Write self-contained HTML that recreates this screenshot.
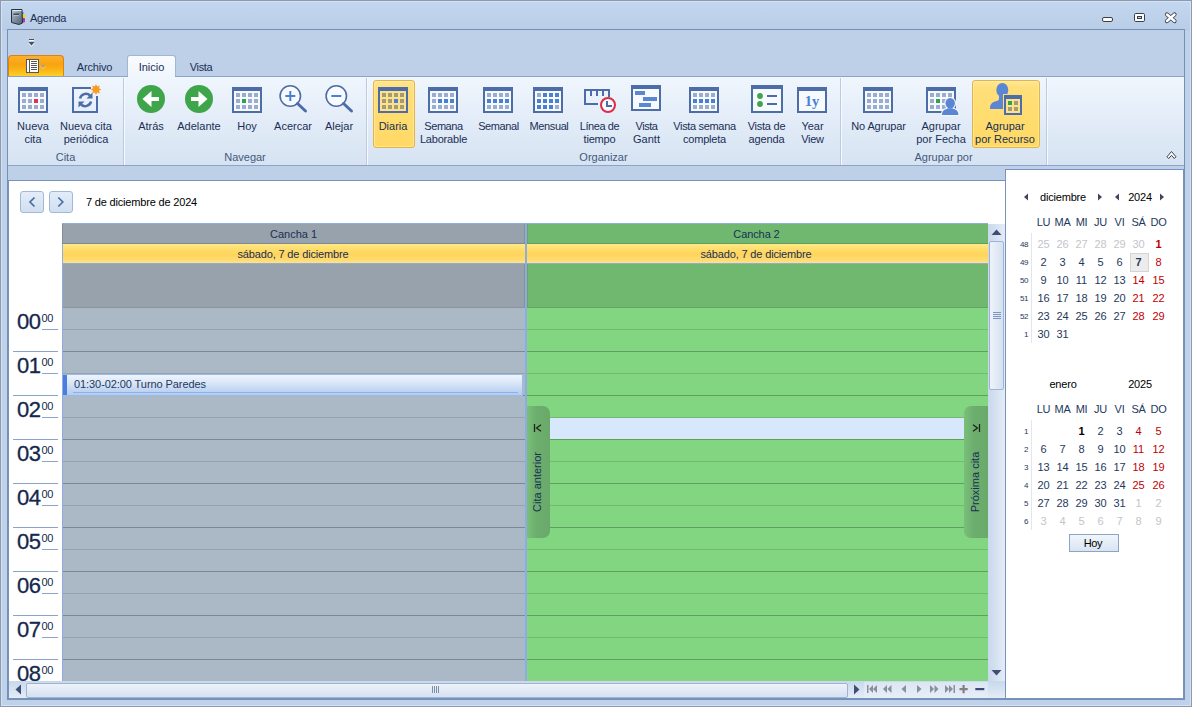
<!DOCTYPE html>
<html lang="es"><head><meta charset="utf-8"><title>Agenda</title>
<style>
*{box-sizing:border-box;margin:0;padding:0}
html,body{width:1192px;height:707px;overflow:hidden}
body{background:#bfd2ea;font-family:"Liberation Sans",sans-serif;font-size:11px;color:#1a2f55;position:relative}
.abs{position:absolute}
.t{position:absolute;white-space:nowrap;line-height:13px}
.c{text-align:center}
#win{position:absolute;left:0;top:0;width:1192px;height:707px;border:1px solid #8e99aa;background:linear-gradient(#c4d7f0 0,#b9cde7 29px,#bfd2ea 30px,#bfd2ea 100%);box-shadow:inset 0 0 0 1px #d3e2f5}
#frame{position:absolute;left:7px;top:29px;width:1178px;height:671px;border:1px solid #7390b8;background:#bdd0e8}
#ribbon{position:absolute;left:8px;top:76px;width:1176px;height:90px;border-top:1px solid #8ea4c6;border-bottom:1px solid #8ea4c6;background:linear-gradient(#f0f6fd 0,#e5eef9 40%,#d6e3f2 100%)}
.sep{position:absolute;top:78px;width:2px;height:87px;border-left:1px solid #bdcbe0;border-right:1px solid #f6f9fd}
.gcap{position:absolute;top:151px;line-height:13px;text-align:center;color:#44597a}
.blab{position:absolute;top:120px;line-height:13px;text-align:center;white-space:nowrap;transform:translateX(-50%)}
.hot{position:absolute;top:80px;height:68px;border:1px solid #e5b347;border-radius:3px;background:linear-gradient(#ffe692 0,#ffdf79 12%,#ffdc6e 60%,#ffd966 100%);box-shadow:inset 0 0 0 1px rgba(255,240,180,.55)}
.ico{position:absolute;top:83px;width:32px;height:32px}
#sched{position:absolute;left:8px;top:180px;width:998px;height:519px;background:#fff;border:1px solid #7793bb}
.navb{position:absolute;top:191px;width:24px;height:22px;border:1px solid #a3b8d8;border-radius:3px;background:linear-gradient(#e3edf9,#d2dff0)}
.hl{position:absolute;height:1px}
.hr{position:absolute;left:17px;font-size:22px;line-height:24px;color:#14284d;letter-spacing:-0.6px;-webkit-text-stroke:0.3px #14284d}
.mn{position:absolute;left:41.500px;font-size:11px;line-height:11px;color:#14284d;letter-spacing:-0.4px}
.dn{position:absolute;font-size:11px;line-height:13px;width:19px;text-align:center;color:#1e395b}
.wk{position:absolute;font-size:8px;line-height:10px;width:12px;text-align:right;color:#1e395b;letter-spacing:-0.5px}
.red{color:#c00000}.gr{color:#c2c5ca}
</style></head><body>
<div id="win"></div>
<div id="frame"></div>

<svg class="abs" style="left:10px;top:8px" width="16" height="18" viewBox="0 0 16 18"><defs><linearGradient id="bk" x1="0" y1="0" x2="1" y2="1"><stop offset="0" stop-color="#b9c5cf"/><stop offset=".45" stop-color="#8494a4"/><stop offset="1" stop-color="#4f6072"/></linearGradient></defs><rect x="11" y="4" width="2.500" height="2.500" fill="#3b8ee6"/><rect x="11" y="6" width="4" height="4.500" rx="1" fill="#f3d21e"/><rect x="11" y="10" width="4" height="4.500" rx="1" fill="#a53fa6"/><path d="M1.500 1.500L12 1.500L12.500 15L9 16.500L1.500 14.500Z" fill="url(#bk)" stroke="#26313d"/><path d="M2.500 2.600h9" stroke="#eef2f6" stroke-width="1"/><rect x="3.500" y="5.500" width="5.500" height="1.500" fill="#3e4b59"/><rect x="3.500" y="7" width="5.500" height=".6" fill="#c9d2db"/></svg>
<div class="t" style="left:30px;top:11px;font-size:11px;line-height:14px;color:#1a2f55;letter-spacing:-0.3px">Agenda</div>
<svg class="abs" style="left:1100px;top:10px" width="82" height="14" viewBox="0 0 82 14"><g fill="#fff" stroke="#3b3f4a" stroke-width="1"><rect x="2.500" y="7.500" width="10" height="4" rx="1.500"/><rect x="34.500" y="3.500" width="10" height="8" rx="1.300"/><rect x="37.500" y="6.500" width="4" height="2" fill="#c3d2e8"/></g><path d="M67 4.500l7.500 6.500M74.500 4.500L67 11" stroke="#3b3f4a" stroke-width="4.200" stroke-linecap="round"/><path d="M67 4.500l7.500 6.500M74.500 4.500L67 11" stroke="#fff" stroke-width="2.500" stroke-linecap="round"/></svg>
<svg class="abs" style="left:28px;top:38px" width="8" height="10" viewBox="0 0 8 10"><rect x="1" y="1" width="5" height="1" fill="#4b4f58"/><rect x="1" y="2" width="5" height="1" fill="#f4f7fb"/><path d="M0.500 4h6L3.500 7.500z" fill="#4b4f58"/><path d="M0.500 5l3 3.500 3-3.500" fill="none" stroke="#eef3fa" stroke-width=".8"/></svg>
<div class="abs" style="left:8px;top:55px;width:56px;height:22px;border:1px solid #e07f14;border-bottom:none;border-radius:4px 4px 0 0;background:linear-gradient(#fbb02a 0,#f9a40f 40%,#fab418 65%,#fdd42a 100%)"></div>
<svg class="abs" style="left:26px;top:59px" width="22" height="14" viewBox="0 0 22 14"><rect x="0.500" y="0.500" width="12" height="13" fill="#fff" stroke="#55575d"/><rect x="3" y="1" width="1" height="12" fill="#55575d"/><g fill="#55575d"><rect x="5" y="2" width="6" height="1"/><rect x="5" y="4" width="6" height="1"/><rect x="5" y="6" width="6" height="1"/><rect x="5" y="8" width="6" height="1"/><rect x="5" y="10" width="6" height="1"/></g><path d="M14.500 6h5l-2.500 3z" fill="#a99c8c"/><path d="M14.500 6.800l2.500 3 2.500-3" fill="none" stroke="#fbe08a" stroke-width=".6"/></svg>
<div class="t c" style="left:66px;top:61px;width:57px;letter-spacing:-0.17px">Archivo</div>
<div class="abs" style="left:127px;top:55px;width:49px;height:23px;border:1px solid #a0b6d6;border-bottom:none;border-radius:3px 3px 0 0;background:linear-gradient(#f9fbfe,#f0f6fd)"></div>
<div class="t c" style="left:127px;top:61px;width:49px">Inicio</div>
<div class="t c" style="left:178px;top:61px;width:46px;letter-spacing:-0.4px">Vista</div>
<div id="ribbon"></div>
<div class="abs" style="left:128px;top:76px;width:47px;height:2px;background:#f1f6fd"></div>
<div class="sep" style="left:123px"></div>
<div class="sep" style="left:366px"></div>
<div class="sep" style="left:840px"></div>
<div class="sep" style="left:1046px"></div>
<div class="gcap" style="left:8px;width:115px">Cita</div>
<div class="gcap" style="left:124px;width:242px">Navegar</div>
<div class="gcap" style="left:367px;width:473px">Organizar</div>
<div class="gcap" style="left:841px;width:205px">Agrupar por</div>
<div class="hot" style="left:373px;width:42px"></div>
<div class="hot" style="left:972px;width:68px"></div>
<svg class="ico" style="left:17px" viewBox="0 0 32 32" overflow="visible"><rect x="2" y="5" width="28" height="24" fill="#f6f9fd" stroke="#4d6da8" stroke-width="2"/><rect x="1" y="4" width="30" height="4" fill="#4d6da8"/><rect x="5" y="10" width="4" height="4" fill="#9badcf"/><rect x="11" y="10" width="4" height="4" fill="#9badcf"/><rect x="17" y="10" width="4" height="4" fill="#9badcf"/><rect x="23" y="10" width="4" height="4" fill="#9badcf"/><rect x="5" y="16" width="4" height="4" fill="#9badcf"/><rect x="11" y="16" width="4" height="4" fill="#9badcf"/><rect x="17" y="16" width="4" height="4" fill="#e0334c"/><rect x="23" y="16" width="4" height="4" fill="#9badcf"/><rect x="5" y="22" width="4" height="4" fill="#9badcf"/><rect x="11" y="22" width="4" height="4" fill="#9badcf"/><rect x="17" y="22" width="4" height="4" fill="#9badcf"/><rect x="23" y="22" width="4" height="4" fill="#9badcf"/></svg>
<div class="blab" style="left:33px">Nueva<br>cita</div>
<svg class="ico" style="left:70px" viewBox="0 0 32 32" overflow="visible"><path d="M21 5H3v24h24V13" fill="none" stroke="#4d6da8" stroke-width="2"/><path d="M10 15.500a6 6 0 0 1 10-3" fill="none" stroke="#4d6da8" stroke-width="2.500"/><path d="M22.500 9.500v6h-6z" fill="#4d6da8"/><path d="M21 18.500a6 6 0 0 1-10 3" fill="none" stroke="#4d6da8" stroke-width="2.500"/><path d="M8.500 24.500v-6h6z" fill="#4d6da8"/><path d="M26 1l1.200 2.600 2.700-1-1 2.700L31.500 6.500l-2.600 1.200 1 2.700-2.700-1L26 12l-1.200-2.600-2.700 1 1-2.700L20.500 6.500l2.600-1.200-1-2.700 2.700 1z" fill="#f99b1c"/></svg>
<div class="blab" style="left:86px">Nueva cita<br>periódica</div>
<svg class="ico" style="left:135px" viewBox="0 0 32 32" overflow="visible"><circle cx="16" cy="16" r="14" fill="#3fa54b"/><path d="M7.500 16l9-8v6h7.500v4h-7.500v6z" fill="#fff"/></svg>
<div class="blab" style="left:151px">Atrás</div>
<svg class="ico" style="left:183px" viewBox="0 0 32 32" overflow="visible"><circle cx="16" cy="16" r="14" fill="#3fa54b"/><path d="M24.500 16l-9-8v6H8v4h7.500v6z" fill="#fff"/></svg>
<div class="blab" style="left:199px">Adelante</div>
<svg class="ico" style="left:231px" viewBox="0 0 32 32" overflow="visible"><rect x="2" y="5" width="28" height="24" fill="#f6f9fd" stroke="#4d6da8" stroke-width="2"/><rect x="1" y="4" width="30" height="4" fill="#4d6da8"/><rect x="5" y="10" width="4" height="4" fill="#9badcf"/><rect x="11" y="10" width="4" height="4" fill="#9badcf"/><rect x="17" y="10" width="4" height="4" fill="#9badcf"/><rect x="23" y="10" width="4" height="4" fill="#9badcf"/><rect x="5" y="16" width="4" height="4" fill="#9badcf"/><rect x="11" y="16" width="4" height="4" fill="#2fa24a"/><rect x="17" y="16" width="4" height="4" fill="#9badcf"/><rect x="23" y="16" width="4" height="4" fill="#9badcf"/><rect x="5" y="22" width="4" height="4" fill="#9badcf"/><rect x="11" y="22" width="4" height="4" fill="#9badcf"/><rect x="17" y="22" width="4" height="4" fill="#9badcf"/><rect x="23" y="22" width="4" height="4" fill="#9badcf"/></svg>
<div class="blab" style="left:247px">Hoy</div>
<svg class="ico" style="left:277px" viewBox="0 0 32 32" overflow="visible"><circle cx="13.300" cy="13" r="10.200" fill="#f7fafe" stroke="#4d6da8" stroke-width="1.600"/><path d="M20.500 20.500l8 7.500" stroke="#4d6da8" stroke-width="3" stroke-linecap="round"/><path d="M8.300 13h10M13.300 8v10" stroke="#4a7fd6" stroke-width="2"/></svg>
<div class="blab" style="left:293px">Acercar</div>
<svg class="ico" style="left:323px" viewBox="0 0 32 32" overflow="visible"><circle cx="13.300" cy="13" r="10.200" fill="#f7fafe" stroke="#4d6da8" stroke-width="1.600"/><path d="M20.500 20.500l8 7.500" stroke="#4d6da8" stroke-width="3" stroke-linecap="round"/><path d="M8.300 13h10" stroke="#4a7fd6" stroke-width="2"/></svg>
<div class="blab" style="left:339px">Alejar</div>
<svg class="ico" style="left:377px" viewBox="0 0 32 32" overflow="visible"><rect x="2" y="5" width="28" height="24" fill="#fde28d" stroke="#4d6da8" stroke-width="2"/><rect x="1" y="4" width="30" height="4" fill="#4d6da8"/><rect x="5" y="10" width="4" height="4" fill="#a59c73"/><rect x="11" y="10" width="4" height="4" fill="#a59c73"/><rect x="17" y="10" width="4" height="4" fill="#a59c73"/><rect x="23" y="10" width="4" height="4" fill="#a59c73"/><rect x="5" y="16" width="4" height="4" fill="#a59c73"/><rect x="11" y="16" width="4" height="4" fill="#a59c73"/><rect x="17" y="16" width="4" height="4" fill="#4a7fd6"/><rect x="23" y="16" width="4" height="4" fill="#a59c73"/><rect x="5" y="22" width="4" height="4" fill="#a59c73"/><rect x="11" y="22" width="4" height="4" fill="#a59c73"/><rect x="17" y="22" width="4" height="4" fill="#a59c73"/><rect x="23" y="22" width="4" height="4" fill="#a59c73"/></svg>
<div class="blab" style="left:393px">Diaria</div>
<svg class="ico" style="left:427px" viewBox="0 0 32 32" overflow="visible"><rect x="2" y="5" width="28" height="24" fill="#f6f9fd" stroke="#4d6da8" stroke-width="2"/><rect x="1" y="4" width="30" height="4" fill="#4d6da8"/><rect x="5" y="10" width="4" height="4" fill="#9badcf"/><rect x="11" y="10" width="4" height="4" fill="#9badcf"/><rect x="17" y="10" width="4" height="4" fill="#9badcf"/><rect x="23" y="10" width="4" height="4" fill="#9badcf"/><rect x="5" y="16" width="4" height="4" fill="#9badcf"/><rect x="11" y="16" width="4" height="4" fill="#4a7fd6"/><rect x="17" y="16" width="4" height="4" fill="#4a7fd6"/><rect x="23" y="16" width="4" height="4" fill="#4a7fd6"/><rect x="5" y="22" width="4" height="4" fill="#9badcf"/><rect x="11" y="22" width="4" height="4" fill="#9badcf"/><rect x="17" y="22" width="4" height="4" fill="#9badcf"/><rect x="23" y="22" width="4" height="4" fill="#9badcf"/></svg>
<div class="blab" style="left:443.5px"><span style="letter-spacing:-0.45px">Semana</span><br><span style="letter-spacing:-0.2px">Laborable</span></div>
<svg class="ico" style="left:482px" viewBox="0 0 32 32" overflow="visible"><rect x="2" y="5" width="28" height="24" fill="#f6f9fd" stroke="#4d6da8" stroke-width="2"/><rect x="1" y="4" width="30" height="4" fill="#4d6da8"/><rect x="5" y="10" width="4" height="4" fill="#9badcf"/><rect x="11" y="10" width="4" height="4" fill="#9badcf"/><rect x="17" y="10" width="4" height="4" fill="#9badcf"/><rect x="23" y="10" width="4" height="4" fill="#9badcf"/><rect x="5" y="16" width="4" height="4" fill="#4a7fd6"/><rect x="11" y="16" width="4" height="4" fill="#4a7fd6"/><rect x="17" y="16" width="4" height="4" fill="#4a7fd6"/><rect x="23" y="16" width="4" height="4" fill="#4a7fd6"/><rect x="5" y="22" width="4" height="4" fill="#9badcf"/><rect x="11" y="22" width="4" height="4" fill="#9badcf"/><rect x="17" y="22" width="4" height="4" fill="#9badcf"/><rect x="23" y="22" width="4" height="4" fill="#9badcf"/></svg>
<div class="blab" style="left:498.5px"><span style="letter-spacing:-0.4px">Semanal</span></div>
<svg class="ico" style="left:532px" viewBox="0 0 32 32" overflow="visible"><rect x="2" y="5" width="28" height="24" fill="#f6f9fd" stroke="#4d6da8" stroke-width="2"/><rect x="1" y="4" width="30" height="4" fill="#4d6da8"/><rect x="5" y="10" width="4" height="4" fill="#9badcf"/><rect x="11" y="10" width="4" height="4" fill="#4a7fd6"/><rect x="17" y="10" width="4" height="4" fill="#4a7fd6"/><rect x="23" y="10" width="4" height="4" fill="#4a7fd6"/><rect x="5" y="16" width="4" height="4" fill="#4a7fd6"/><rect x="11" y="16" width="4" height="4" fill="#4a7fd6"/><rect x="17" y="16" width="4" height="4" fill="#4a7fd6"/><rect x="23" y="16" width="4" height="4" fill="#4a7fd6"/><rect x="5" y="22" width="4" height="4" fill="#4a7fd6"/><rect x="11" y="22" width="4" height="4" fill="#4a7fd6"/><rect x="17" y="22" width="4" height="4" fill="#4a7fd6"/><rect x="23" y="22" width="4" height="4" fill="#9badcf"/></svg>
<div class="blab" style="left:549px"><span style="letter-spacing:-0.4px">Mensual</span></div>
<svg class="ico" style="left:583px" viewBox="0 0 32 32" overflow="visible"><path d="M26 14V7H2v14h13" fill="none" stroke="#4d6da8" stroke-width="2"/><path d="M8 7v6M14 7v6M20 7v6" stroke="#4d6da8" stroke-width="2"/><circle cx="25" cy="22" r="7" fill="#f6f9fd" stroke="#dc2d43" stroke-width="2"/><path d="M24 18v5h5" fill="none" stroke="#4d6da8" stroke-width="2"/></svg>
<div class="blab" style="left:599.5px"><span style="letter-spacing:-0.4px">Línea de</span><br><span style="letter-spacing:-0.2px">tiempo</span></div>
<svg class="ico" style="left:630px" viewBox="0 0 32 32" overflow="visible"><rect x="2" y="3" width="28" height="24" fill="#f6f9fd" stroke="#4d6da8" stroke-width="2"/><rect x="1" y="2" width="30" height="4" fill="#4d6da8"/><rect x="5" y="8" width="10" height="4" fill="#5a86d4"/><rect x="13" y="14" width="14" height="4" fill="#5a86d4"/><rect x="9" y="20" width="12" height="4" fill="#5a86d4"/></svg>
<div class="blab" style="left:646.5px"><span style="letter-spacing:-0.45px">Vista</span><br>Gantt</div>
<svg class="ico" style="left:688px" viewBox="0 0 32 32" overflow="visible"><rect x="2" y="5" width="28" height="24" fill="#f6f9fd" stroke="#4d6da8" stroke-width="2"/><rect x="1" y="4" width="30" height="4" fill="#4d6da8"/><rect x="5" y="10" width="4" height="4" fill="#9badcf"/><rect x="11" y="10" width="4" height="4" fill="#9badcf"/><rect x="17" y="10" width="4" height="4" fill="#9badcf"/><rect x="23" y="10" width="4" height="4" fill="#9badcf"/><rect x="5" y="16" width="4" height="4" fill="#4a7fd6"/><rect x="11" y="16" width="4" height="4" fill="#4a7fd6"/><rect x="17" y="16" width="4" height="4" fill="#4a7fd6"/><rect x="23" y="16" width="4" height="4" fill="#4a7fd6"/><rect x="5" y="22" width="4" height="4" fill="#9badcf"/><rect x="11" y="22" width="4" height="4" fill="#9badcf"/><rect x="17" y="22" width="4" height="4" fill="#9badcf"/><rect x="23" y="22" width="4" height="4" fill="#9badcf"/></svg>
<div class="blab" style="left:704.5px"><span style="letter-spacing:-0.33px">Vista semana</span><br><span style="letter-spacing:-0.2px">completa</span></div>
<svg class="ico" style="left:751px" viewBox="0 0 32 32" overflow="visible"><rect x="1" y="3" width="30" height="26" fill="#f6f9fd" stroke="#4d6da8" stroke-width="2"/><rect x="0" y="2" width="32" height="4" fill="#4d6da8"/><circle cx="9" cy="13" r="2.900" fill="#3fa54b"/><circle cx="9" cy="21" r="2.900" fill="#3fa54b"/><rect x="16" y="12" width="10" height="2" fill="#4d6da8"/><rect x="16" y="20" width="10" height="2" fill="#4d6da8"/></svg>
<div class="blab" style="left:766.5px"><span style="letter-spacing:-0.25px">Vista de</span><br><span style="letter-spacing:-0.15px">agenda</span></div>
<svg class="ico" style="left:796px" viewBox="0 0 32 32" overflow="visible"><rect x="2" y="5" width="28" height="24" fill="#f6f9fd" stroke="#4d6da8" stroke-width="2"/><rect x="1" y="4" width="30" height="4" fill="#4d6da8"/><text x="16" y="22.800" text-anchor="middle" font-family="Liberation Serif,serif" font-weight="bold" font-size="14.500" fill="#4a7fd6">1y</text></svg>
<div class="blab" style="left:812.5px">Year<br><span style="letter-spacing:-0.3px">View</span></div>
<svg class="ico" style="left:862px" viewBox="0 0 32 32" overflow="visible"><rect x="2" y="5" width="28" height="24" fill="#f6f9fd" stroke="#4d6da8" stroke-width="2"/><rect x="1" y="4" width="30" height="4" fill="#4d6da8"/><rect x="5" y="10" width="4" height="4" fill="#9badcf"/><rect x="11" y="10" width="4" height="4" fill="#9badcf"/><rect x="17" y="10" width="4" height="4" fill="#9badcf"/><rect x="23" y="10" width="4" height="4" fill="#9badcf"/><rect x="5" y="16" width="4" height="4" fill="#9badcf"/><rect x="11" y="16" width="4" height="4" fill="#9badcf"/><rect x="17" y="16" width="4" height="4" fill="#9badcf"/><rect x="23" y="16" width="4" height="4" fill="#9badcf"/><rect x="5" y="22" width="4" height="4" fill="#9badcf"/><rect x="11" y="22" width="4" height="4" fill="#9badcf"/><rect x="17" y="22" width="4" height="4" fill="#9badcf"/><rect x="23" y="22" width="4" height="4" fill="#9badcf"/></svg>
<div class="blab" style="left:878.5px"><span style="letter-spacing:-0.1px">No Agrupar</span></div>
<svg class="ico" style="left:925px" viewBox="0 0 32 32" overflow="visible"><rect x="2" y="5" width="28" height="24" fill="#f6f9fd" stroke="#4d6da8" stroke-width="2"/><rect x="1" y="4" width="30" height="4" fill="#4d6da8"/><rect x="5" y="10" width="4" height="4" fill="#9badcf"/><rect x="11" y="10" width="4" height="4" fill="#9badcf"/><rect x="17" y="10" width="4" height="4" fill="#9badcf"/><rect x="23" y="10" width="4" height="4" fill="#9badcf"/><rect x="5" y="16" width="4" height="4" fill="#9badcf"/><rect x="11" y="16" width="4" height="4" fill="#2fa24a"/><rect x="17" y="16" width="4" height="4" fill="#9badcf"/><rect x="23" y="16" width="4" height="4" fill="#9badcf"/><rect x="5" y="22" width="4" height="4" fill="#9badcf"/><rect x="11" y="22" width="4" height="4" fill="#9badcf"/><rect x="17" y="22" width="4" height="4" fill="#9badcf"/><rect x="23" y="22" width="4" height="4" fill="#9badcf"/><g fill="#5a86d4" stroke="#f1f6fc" stroke-width="2.400" stroke-linejoin="round"><ellipse cx="25.200" cy="20.300" rx="4.700" ry="5.200"/><path d="M17 32c0-3.800 1.800-5.200 4.800-6l1.200-.4h4.400l1.200.4c3 .8 4.800 2.200 4.800 6z"/></g><g fill="#5a86d4"><ellipse cx="25.200" cy="20.300" rx="4.700" ry="5.200"/><path d="M17 32c0-3.800 1.800-5.200 4.800-6l1.200-.8h4.400l1.200.8c3 .8 4.800 2.200 4.800 6z"/></g></svg>
<div class="blab" style="left:941px">Agrupar<br>por Fecha</div>
<svg class="ico" style="left:989px" viewBox="0 0 32 32" overflow="visible"><g fill="#5a86d4"><ellipse cx="13.300" cy="7" rx="6" ry="7"/><path d="M1 26c0-4.500 1.500-6.500 5-7.500c2-.5 3.500-1 4-2.500v-4h6v14z"/></g><rect x="15" y="12" width="18" height="20" fill="none" stroke="#ffde76" stroke-width="2"/><rect x="16" y="13" width="16" height="18" fill="#fde28d" stroke="#4d6da8" stroke-width="2"/><rect x="15" y="12" width="18" height="4" fill="#4d6da8"/><rect x="19" y="18" width="4" height="4" fill="#2fa24a"/><rect x="25" y="18" width="4" height="4" fill="#a59c73"/><rect x="19" y="24" width="4" height="4" fill="#a59c73"/><rect x="25" y="24" width="4" height="4" fill="#a59c73"/></svg>
<div class="blab" style="left:1005px">Agrupar<br>por Recurso</div>
<svg class="abs" style="left:1165px;top:149px" width="13" height="12" viewBox="0 0 13 12"><path d="M2 7.800L6.500 2.500 11 7.800 9.300 9.500 6.500 6.300 3.700 9.500z" fill="#fff" stroke="#3b3f4a" stroke-width="1" stroke-linejoin="round"/></svg>
<div id="sched"></div>
<div class="navb" style="left:20px"><svg class="abs" style="left:-1px;top:-1px" width="24" height="22"><path d="M14.500 6.500L10 11l4.500 4.500" fill="none" stroke="#4a6ca8" stroke-width="1.700"/></svg></div>
<div class="navb" style="left:49px"><svg class="abs" style="left:-1px;top:-1px" width="24" height="22"><path d="M9.300 6.500L13.800 11 9.300 15.500" fill="none" stroke="#4a6ca8" stroke-width="1.700"/></svg></div>
<div class="t" style="left:86px;top:196px;color:#000;letter-spacing:-0.18px">7 de diciembre de 2024</div>
<div class="abs" style="left:62px;top:224px;width:463px;height:84px;background:#98a2ad;border-left:1px solid #838d9a;border-right:1px solid #868f9b"></div>
<div class="abs" style="left:527px;top:224px;width:461px;height:84px;background:#70b870;border-left:1px solid #63a564"></div>
<div class="abs" style="left:63px;top:308px;width:462px;height:374px;background:#abb8c5"></div>
<div class="abs" style="left:527px;top:308px;width:461px;height:374px;background:#82d682"></div>
<div class="t c" style="left:62px;top:228px;width:463px">Cancha 1</div>
<div class="t c" style="left:526px;top:228px;width:461px;letter-spacing:-0.1px">Cancha 2</div>
<div class="abs" style="left:62px;top:243px;width:463px;height:1px;background:#7f8995"></div>
<div class="abs" style="left:527px;top:243px;width:461px;height:1px;background:#5f9f60"></div>
<div class="abs" style="left:63px;top:244px;width:462px;height:19px;background:linear-gradient(#ffe985 0,#ffdc6a 30%,#ffd45c 55%,#ffda6c 80%,#ffe382 100%)"></div>
<div class="t c" style="left:62px;top:248px;width:462px;letter-spacing:-0.15px">sábado, 7 de diciembre</div>
<div class="abs" style="left:527px;top:244px;width:461px;height:19px;background:linear-gradient(#ffe985 0,#ffdc6a 30%,#ffd45c 55%,#ffda6c 80%,#ffe382 100%)"></div>
<div class="t c" style="left:525.5px;top:248px;width:461px;letter-spacing:-0.15px">sábado, 7 de diciembre</div>
<div class="abs" style="left:62px;top:223px;width:926px;height:1px;background:#8eace0"></div>
<div class="abs" style="left:62px;top:263px;width:926px;height:1px;background:#8eace0"></div>
<div class="hl" style="left:63px;top:307px;width:462px;background:#8a94a0"></div>
<div class="hl" style="left:527px;top:307px;width:461px;background:#62a663"></div>
<div class="hl" style="left:63px;top:329px;width:462px;background:#97a3af"></div>
<div class="hl" style="left:527px;top:329px;width:461px;background:#70bb71"></div>
<div class="hl" style="left:42px;top:329px;width:16px;background:#8ba5c9"></div>
<div class="hl" style="left:63px;top:351px;width:462px;background:#7d8893"></div>
<div class="hl" style="left:527px;top:351px;width:461px;background:#5f9f60"></div>
<div class="hl" style="left:13px;top:351px;width:45px;background:#8ba5c9"></div>
<div class="hl" style="left:63px;top:373px;width:462px;background:#97a3af"></div>
<div class="hl" style="left:527px;top:373px;width:461px;background:#70bb71"></div>
<div class="hl" style="left:42px;top:373px;width:16px;background:#8ba5c9"></div>
<div class="hl" style="left:63px;top:395px;width:462px;background:#7d8893"></div>
<div class="hl" style="left:527px;top:395px;width:461px;background:#5f9f60"></div>
<div class="hl" style="left:13px;top:395px;width:45px;background:#8ba5c9"></div>
<div class="hl" style="left:63px;top:417px;width:462px;background:#97a3af"></div>
<div class="hl" style="left:527px;top:417px;width:461px;background:#70bb71"></div>
<div class="hl" style="left:42px;top:417px;width:16px;background:#8ba5c9"></div>
<div class="hl" style="left:63px;top:439px;width:462px;background:#7d8893"></div>
<div class="hl" style="left:527px;top:439px;width:461px;background:#5f9f60"></div>
<div class="hl" style="left:13px;top:439px;width:45px;background:#8ba5c9"></div>
<div class="hl" style="left:63px;top:461px;width:462px;background:#97a3af"></div>
<div class="hl" style="left:527px;top:461px;width:461px;background:#70bb71"></div>
<div class="hl" style="left:42px;top:461px;width:16px;background:#8ba5c9"></div>
<div class="hl" style="left:63px;top:483px;width:462px;background:#7d8893"></div>
<div class="hl" style="left:527px;top:483px;width:461px;background:#5f9f60"></div>
<div class="hl" style="left:13px;top:483px;width:45px;background:#8ba5c9"></div>
<div class="hl" style="left:63px;top:505px;width:462px;background:#97a3af"></div>
<div class="hl" style="left:527px;top:505px;width:461px;background:#70bb71"></div>
<div class="hl" style="left:42px;top:505px;width:16px;background:#8ba5c9"></div>
<div class="hl" style="left:63px;top:527px;width:462px;background:#7d8893"></div>
<div class="hl" style="left:527px;top:527px;width:461px;background:#5f9f60"></div>
<div class="hl" style="left:13px;top:527px;width:45px;background:#8ba5c9"></div>
<div class="hl" style="left:63px;top:549px;width:462px;background:#97a3af"></div>
<div class="hl" style="left:527px;top:549px;width:461px;background:#70bb71"></div>
<div class="hl" style="left:42px;top:549px;width:16px;background:#8ba5c9"></div>
<div class="hl" style="left:63px;top:571px;width:462px;background:#7d8893"></div>
<div class="hl" style="left:527px;top:571px;width:461px;background:#5f9f60"></div>
<div class="hl" style="left:13px;top:571px;width:45px;background:#8ba5c9"></div>
<div class="hl" style="left:63px;top:593px;width:462px;background:#97a3af"></div>
<div class="hl" style="left:527px;top:593px;width:461px;background:#70bb71"></div>
<div class="hl" style="left:42px;top:593px;width:16px;background:#8ba5c9"></div>
<div class="hl" style="left:63px;top:615px;width:462px;background:#7d8893"></div>
<div class="hl" style="left:527px;top:615px;width:461px;background:#5f9f60"></div>
<div class="hl" style="left:13px;top:615px;width:45px;background:#8ba5c9"></div>
<div class="hl" style="left:63px;top:637px;width:462px;background:#97a3af"></div>
<div class="hl" style="left:527px;top:637px;width:461px;background:#70bb71"></div>
<div class="hl" style="left:42px;top:637px;width:16px;background:#8ba5c9"></div>
<div class="hl" style="left:63px;top:659px;width:462px;background:#7d8893"></div>
<div class="hl" style="left:527px;top:659px;width:461px;background:#5f9f60"></div>
<div class="hl" style="left:13px;top:659px;width:45px;background:#8ba5c9"></div>
<div class="hr" style="top:310px">00</div><div class="mn" style="top:313px">00</div>
<div class="hr" style="top:354px">01</div><div class="mn" style="top:357px">00</div>
<div class="hr" style="top:398px">02</div><div class="mn" style="top:401px">00</div>
<div class="hr" style="top:442px">03</div><div class="mn" style="top:445px">00</div>
<div class="hr" style="top:486px">04</div><div class="mn" style="top:489px">00</div>
<div class="hr" style="top:530px">05</div><div class="mn" style="top:533px">00</div>
<div class="hr" style="top:574px">06</div><div class="mn" style="top:577px">00</div>
<div class="hr" style="top:618px">07</div><div class="mn" style="top:621px">00</div>
<div class="hr" style="top:662px">08</div><div class="mn" style="top:665px">00</div>
<div class="abs" style="left:62px;top:244px;width:1px;height:437px;background:#8eace0"></div>
<div class="abs" style="left:525px;top:224px;width:2px;height:457px;background:#8eace0"></div>
<div class="abs" style="left:63px;top:374px;width:460px;height:22px;border:1px solid #9bbaea;background:linear-gradient(#eef4fc 0,#dde8f8 35%,#c5d8f3 70%,#b3ccef 100%)"></div>
<div class="abs" style="left:63px;top:375px;width:4px;height:20px;background:#4a7fe0"></div>
<div class="abs" style="left:73px;top:392px;width:445px;height:1px;background:#8fb0e6"></div>
<div class="t" style="left:74px;top:378px;color:#1e395b;letter-spacing:-0.08px">01:30-02:00 Turno Paredes</div>
<div class="abs" style="left:527px;top:418px;width:461px;height:21px;background:#d7e7fc"></div>
<div class="abs" style="left:527px;top:406px;width:23px;height:132px;border-radius:0 7px 7px 0;background:linear-gradient(90deg,#79bf79 0,#6dae6e 40%,#69a96a 100%)"></div>
<div class="abs" style="left:964px;top:406px;width:24px;height:132px;border-radius:7px 0 0 7px;background:linear-gradient(90deg,#79bf79 0,#6dae6e 40%,#69a96a 100%)"></div>
<svg class="abs" style="left:533px;top:422.500px" width="10" height="10"><path d="M1.500 1v8M8 1.800L3.500 5 8 8.200" fill="none" stroke="#1b241b" stroke-width="1.250"/></svg>
<svg class="abs" style="left:971px;top:422.500px" width="10" height="10"><path d="M8.500 1v8M2 1.800L6.500 5 2 8.200" fill="none" stroke="#1b241b" stroke-width="1.250"/></svg>
<div class="t" style="left:536.500px;top:482px;width:0;height:0"><div style="position:absolute;transform:translate(-50%,-50%) rotate(-90deg);white-space:nowrap;line-height:13px">Cita anterior</div></div>
<div class="t" style="left:975px;top:482px;width:0;height:0"><div style="position:absolute;transform:translate(-50%,-50%) rotate(-90deg);white-space:nowrap;line-height:13px">Próxima cita</div></div>
<div class="abs" style="left:988px;top:224px;width:17px;height:458px;background:linear-gradient(90deg,#c9d8ec,#e4ecf7)"></div>
<div class="abs" style="left:989px;top:241px;width:15px;height:149px;border:1px solid #9fb4d3;border-radius:2px;background:linear-gradient(90deg,#eef3fa,#d5e1f1)"></div>
<svg class="abs" style="left:991px;top:228px" width="11" height="8"><path d="M0.500 7L5.500 1.500 10.500 7z" fill="#3f4f74"/></svg>
<svg class="abs" style="left:991px;top:669px" width="11" height="8"><path d="M0.500 1L5.500 6.500 10.500 1z" fill="#3f4f74"/></svg>
<div class="abs" style="left:993px;top:312px;width:8px;height:1px;background:#7f97bf;box-shadow:0 2px 0 #7f97bf,0 4px 0 #7f97bf,0 6px 0 #7f97bf"></div>
<div class="abs" style="left:9px;top:681px;width:996px;height:17px;background:linear-gradient(#c9d8ec,#e4ecf7)"></div>
<div class="abs" style="left:26px;top:683px;width:822px;height:15px;border:1px solid #9fb4d3;border-radius:2px;background:linear-gradient(#eef3fa,#d5e1f1)"></div>
<svg class="abs" style="left:14px;top:684px" width="8" height="11"><path d="M7 0.500L1.500 5.500 7 10.500z" fill="#3f4f74"/></svg>
<svg class="abs" style="left:853px;top:684px" width="8" height="11"><path d="M1 0.500L6.500 5.500 1 10.500z" fill="#3f4f74"/></svg>
<div class="abs" style="left:432px;top:686px;width:1px;height:7px;background:#7c8ea9;box-shadow:2px 0 0 #7c8ea9,4px 0 0 #7c8ea9,6px 0 0 #7c8ea9"></div>
<div class="abs" style="left:864px;top:682px;width:124px;height:16px;background:linear-gradient(#dbe6f4,#e6eef8)"></div>
<svg class="abs" style="left:864px;top:682.400px" width="126" height="14" viewBox="0 0 126 14"><g fill="#8a8f99"><rect x="3" y="3" width="1.500" height="8"/><path d="M9 3v8L5 7zM13 3v8L9 7z"/><path d="M23 3v8L19 7zM27.500 3v8L23.500 7z"/><path d="M42 3v8L37.500 7z"/><path d="M53 3v8l4.500-4z"/><path d="M66 3v8l4-4zM70.500 3v8l4-4z"/><path d="M81 3v8l4-4zM85 3v8l4-4z"/><rect x="89.500" y="3" width="1.500" height="8"/><path d="M95.500 6h3V3h2.200v3h3v2.200h-3v3h-2.200v-3h-3z" fill="#808080"/><rect x="111.300" y="6" width="9" height="2.200" fill="#3d4b7a"/></g></svg>
<div class="abs" style="left:1005px;top:169px;width:179px;height:530px;background:#fff;border:1px solid #7793bb"></div>
<svg class="abs" style="left:1023px;top:193px" width="6" height="8"><path d="M5 0.500v7L1 4z" fill="#3f4562"/></svg>
<svg class="abs" style="left:1097px;top:193px" width="6" height="8"><path d="M1 0.500v7L5 4z" fill="#3f4562"/></svg>
<svg class="abs" style="left:1114px;top:193px" width="6" height="8"><path d="M5 0.500v7L1 4z" fill="#3f4562"/></svg>
<svg class="abs" style="left:1159px;top:193px" width="6" height="8"><path d="M1 0.500v7L5 4z" fill="#3f4562"/></svg>
<div class="t c" style="left:1032px;top:191px;width:62px;color:#000;letter-spacing:-0.2px">diciembre</div>
<div class="t c" style="left:1124px;top:191px;width:32px;color:#000;letter-spacing:-0.2px">2024</div>
<div class="t c" style="left:1032px;top:378px;width:62px;color:#000;letter-spacing:-0.2px">enero</div>
<div class="t c" style="left:1124px;top:378px;width:32px;color:#000;letter-spacing:-0.2px">2025</div>
<div class="abs" style="left:1130px;top:253px;width:19px;height:19px;background:#ececec;border:1px solid #d4d4d4"></div>
<div class="dn" style="left:1034px;top:216px;letter-spacing:-0.3px">LU</div>
<div class="dn" style="left:1053px;top:216px;letter-spacing:-0.3px">MA</div>
<div class="dn" style="left:1072px;top:216px;letter-spacing:-0.3px">MI</div>
<div class="dn" style="left:1091px;top:216px;letter-spacing:-0.3px">JU</div>
<div class="dn" style="left:1110px;top:216px;letter-spacing:-0.3px">VI</div>
<div class="dn" style="left:1129px;top:216px;letter-spacing:-0.3px">SÁ</div>
<div class="dn" style="left:1149px;top:216px;letter-spacing:-0.3px">DO</div>
<div class="abs" style="left:1031px;top:233px;width:1px;height:110px;background:#e3e6ea"></div>
<div class="wk" style="left:1016px;top:240px">48</div>
<div class="dn gr" style="left:1034px;top:238px">25</div>
<div class="dn gr" style="left:1053px;top:238px">26</div>
<div class="dn gr" style="left:1072px;top:238px">27</div>
<div class="dn gr" style="left:1091px;top:238px">28</div>
<div class="dn gr" style="left:1110px;top:238px">29</div>
<div class="dn gr" style="left:1129px;top:238px">30</div>
<div class="dn red" style="left:1149px;top:238px"><b>1</b></div>
<div class="wk" style="left:1016px;top:258px">49</div>
<div class="dn " style="left:1034px;top:256px">2</div>
<div class="dn " style="left:1053px;top:256px">3</div>
<div class="dn " style="left:1072px;top:256px">4</div>
<div class="dn " style="left:1091px;top:256px">5</div>
<div class="dn " style="left:1110px;top:256px">6</div>
<div class="dn sel" style="left:1129px;top:256px"><b>7</b></div>
<div class="dn red" style="left:1149px;top:256px">8</div>
<div class="wk" style="left:1016px;top:276px">50</div>
<div class="dn " style="left:1034px;top:274px">9</div>
<div class="dn " style="left:1053px;top:274px">10</div>
<div class="dn " style="left:1072px;top:274px">11</div>
<div class="dn " style="left:1091px;top:274px">12</div>
<div class="dn " style="left:1110px;top:274px">13</div>
<div class="dn red" style="left:1129px;top:274px">14</div>
<div class="dn red" style="left:1149px;top:274px">15</div>
<div class="wk" style="left:1016px;top:294px">51</div>
<div class="dn " style="left:1034px;top:292px">16</div>
<div class="dn " style="left:1053px;top:292px">17</div>
<div class="dn " style="left:1072px;top:292px">18</div>
<div class="dn " style="left:1091px;top:292px">19</div>
<div class="dn " style="left:1110px;top:292px">20</div>
<div class="dn red" style="left:1129px;top:292px">21</div>
<div class="dn red" style="left:1149px;top:292px">22</div>
<div class="wk" style="left:1016px;top:312px">52</div>
<div class="dn " style="left:1034px;top:310px">23</div>
<div class="dn " style="left:1053px;top:310px">24</div>
<div class="dn " style="left:1072px;top:310px">25</div>
<div class="dn " style="left:1091px;top:310px">26</div>
<div class="dn " style="left:1110px;top:310px">27</div>
<div class="dn red" style="left:1129px;top:310px">28</div>
<div class="dn red" style="left:1149px;top:310px">29</div>
<div class="wk" style="left:1016px;top:330px">1</div>
<div class="dn " style="left:1034px;top:328px">30</div>
<div class="dn " style="left:1053px;top:328px">31</div>
<div class="dn" style="left:1034px;top:403px;letter-spacing:-0.3px">LU</div>
<div class="dn" style="left:1053px;top:403px;letter-spacing:-0.3px">MA</div>
<div class="dn" style="left:1072px;top:403px;letter-spacing:-0.3px">MI</div>
<div class="dn" style="left:1091px;top:403px;letter-spacing:-0.3px">JU</div>
<div class="dn" style="left:1110px;top:403px;letter-spacing:-0.3px">VI</div>
<div class="dn" style="left:1129px;top:403px;letter-spacing:-0.3px">SÁ</div>
<div class="dn" style="left:1149px;top:403px;letter-spacing:-0.3px">DO</div>
<div class="abs" style="left:1031px;top:420px;width:1px;height:110px;background:#e3e6ea"></div>
<div class="wk" style="left:1016px;top:427px">1</div>
<div class="dn " style="left:1072px;top:425px"><b style="color:#000">1</b></div>
<div class="dn " style="left:1091px;top:425px">2</div>
<div class="dn " style="left:1110px;top:425px">3</div>
<div class="dn red" style="left:1129px;top:425px">4</div>
<div class="dn red" style="left:1149px;top:425px">5</div>
<div class="wk" style="left:1016px;top:445px">2</div>
<div class="dn " style="left:1034px;top:443px">6</div>
<div class="dn " style="left:1053px;top:443px">7</div>
<div class="dn " style="left:1072px;top:443px">8</div>
<div class="dn " style="left:1091px;top:443px">9</div>
<div class="dn " style="left:1110px;top:443px">10</div>
<div class="dn red" style="left:1129px;top:443px">11</div>
<div class="dn red" style="left:1149px;top:443px">12</div>
<div class="wk" style="left:1016px;top:463px">3</div>
<div class="dn " style="left:1034px;top:461px">13</div>
<div class="dn " style="left:1053px;top:461px">14</div>
<div class="dn " style="left:1072px;top:461px">15</div>
<div class="dn " style="left:1091px;top:461px">16</div>
<div class="dn " style="left:1110px;top:461px">17</div>
<div class="dn red" style="left:1129px;top:461px">18</div>
<div class="dn red" style="left:1149px;top:461px">19</div>
<div class="wk" style="left:1016px;top:481px">4</div>
<div class="dn " style="left:1034px;top:479px">20</div>
<div class="dn " style="left:1053px;top:479px">21</div>
<div class="dn " style="left:1072px;top:479px">22</div>
<div class="dn " style="left:1091px;top:479px">23</div>
<div class="dn " style="left:1110px;top:479px">24</div>
<div class="dn red" style="left:1129px;top:479px">25</div>
<div class="dn red" style="left:1149px;top:479px">26</div>
<div class="wk" style="left:1016px;top:499px">5</div>
<div class="dn " style="left:1034px;top:497px">27</div>
<div class="dn " style="left:1053px;top:497px">28</div>
<div class="dn " style="left:1072px;top:497px">29</div>
<div class="dn " style="left:1091px;top:497px">30</div>
<div class="dn " style="left:1110px;top:497px">31</div>
<div class="dn gr" style="left:1129px;top:497px">1</div>
<div class="dn gr" style="left:1149px;top:497px">2</div>
<div class="wk" style="left:1016px;top:517px">6</div>
<div class="dn gr" style="left:1034px;top:515px">3</div>
<div class="dn gr" style="left:1053px;top:515px">4</div>
<div class="dn gr" style="left:1072px;top:515px">5</div>
<div class="dn gr" style="left:1091px;top:515px">6</div>
<div class="dn gr" style="left:1110px;top:515px">7</div>
<div class="dn gr" style="left:1129px;top:515px">8</div>
<div class="dn gr" style="left:1149px;top:515px">9</div>
<div class="abs" style="left:1069px;top:534px;width:50px;height:18px;border:1px solid #8ba5c9;background:linear-gradient(#f1f5fb,#d9e4f2)"></div>
<div class="t c" style="left:1068px;top:537px;width:50px;color:#000;letter-spacing:-0.3px">Hoy</div>
</body></html>
